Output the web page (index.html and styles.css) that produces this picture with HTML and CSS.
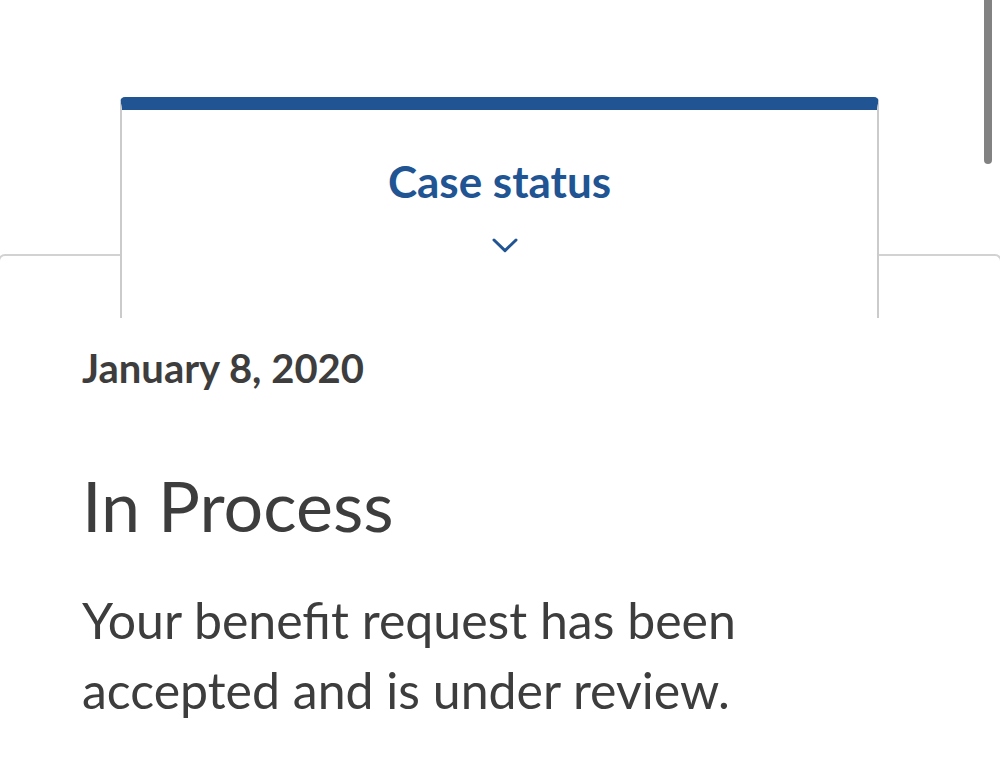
FILE: index.html
```html
<!DOCTYPE html>
<html lang="en">
<head>
<meta charset="utf-8">
<title>Case status</title>
<link rel="stylesheet" href="styles.css">
</head>
<body>
<div class="page">
  <div class="tabs">
    <div class="tab">
      <div class="tab-title">Case status</div>
      <svg class="chevron" width="26" height="15" viewBox="0 0 26 15" aria-hidden="true">
        <path d="M2 2 L13 12.6 L24 2" fill="none" stroke="#205493" stroke-width="3" stroke-linecap="round" stroke-linejoin="round"/>
      </svg>
    </div>
  </div>
  <div class="panel">
    <div class="content">
      <div class="date">January 8, 2020</div>
      <h1 class="status">In Process</h1>
      <p class="desc">Your benefit request has been accepted and is under review.</p>
    </div>
  </div>
  <div class="scrollbar"></div>
</div>
</body>
</html>
```
FILE: styles.css
```css
html, body {
  margin: 0;
  padding: 0;
  background: #ffffff;
}
body {
  font-family: "Lato", "Liberation Sans", sans-serif;
  color: #3d3d3d;
  overflow: hidden;
}
.page {
  position: relative;
  width: 1000px;
  height: 764px;
  overflow: hidden;
}
.tabs {
  padding-top: 97px;
  display: flex;
  justify-content: flex-start;
  padding-left: 120px;
}
.tab {
  position: relative;
  z-index: 1;
  width: 755px;
  height: 208px;
  background: #ffffff;
  border-top: 13px solid #205493;
  border-left: 2px solid #cbcbcb;
  border-right: 2px solid #cbcbcb;
  border-radius: 5px 5px 0 0;
  display: flex;
  flex-direction: column;
  align-items: center;
}
.tab-title {
  margin-top: 45px;
  font-size: 44px;
  font-weight: 700;
  line-height: 52px;
  color: #205493;
}
.chevron {
  margin-top: 31px;
  margin-left: 11px;
  display: block;
}
.panel {
  margin: -64px -2px 0;
  border-top: 2px solid #d2d2d2;
  border-left: 2px solid #d2d2d2;
  border-right: 2px solid #d2d2d2;
  border-radius: 7px 7px 0 0;
  height: 600px;
}
.content {
  padding: 88px 0 0 82px;
}
.date {
  font-size: 40px;
  font-weight: 700;
  line-height: 48px;
}
.status {
  margin: 73px 0 0;
  font-size: 70px;
  font-weight: 400;
  line-height: 80px;
}
.desc {
  margin: 40px 0 0;
  width: 760px;
  font-size: 50px;
  line-height: 70px;
}
.scrollbar {
  position: absolute;
  top: 0;
  left: 984px;
  width: 8px;
  height: 164px;
  border-radius: 0 0 4px 4px;
  background: #828282;
}
```
